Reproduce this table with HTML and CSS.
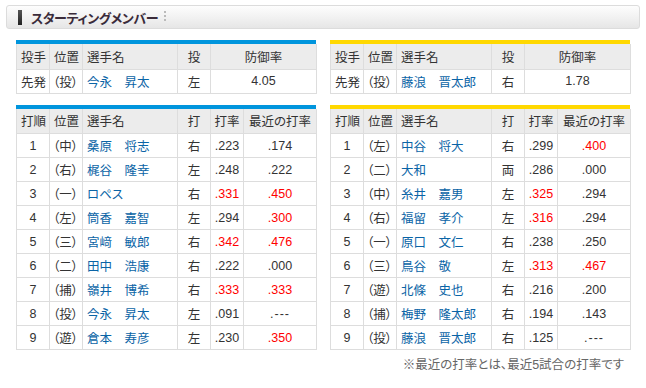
FILE: index.html
```html
<!DOCTYPE html>
<html lang="ja">
<head>
<meta charset="utf-8">
<link rel="stylesheet" href="styles.css">
</head>
<body>
<div class="page">
  <div class="title-bar">
    <span class="title-mark"></span>
    <h2 class="title">スターティングメンバー</h2>
    <span class="title-dots"></span>
  </div>

  <div class="grid">
    <div class="team team-home">
      <table class="tbl tbl-pitcher">
        <colgroup><col class="c-a"><col class="c-b"><col class="c-name"><col class="c-d"><col class="c-era"></colgroup>
        <thead><tr><th class="l">投手</th><th class="l">位置</th><th class="l">選手名</th><th>投</th><th>防御率</th></tr></thead>
        <tbody><tr><td class="l">先発</td><td class="pos">（投）</td><td class="l"><a>今永　昇太</a></td><td>左</td><td>4.05</td></tr></tbody>
      </table>
    </div>
    <div class="team team-away">
      <table class="tbl tbl-pitcher">
        <colgroup><col class="c-a"><col class="c-b"><col class="c-name"><col class="c-d"><col class="c-era"></colgroup>
        <thead><tr><th class="l">投手</th><th class="l">位置</th><th class="l">選手名</th><th>投</th><th>防御率</th></tr></thead>
        <tbody><tr><td class="l">先発</td><td class="pos">（投）</td><td class="l"><a>藤浪　晋太郎</a></td><td>右</td><td>1.78</td></tr></tbody>
      </table>
    </div>

    <div class="team team-home">
      <table class="tbl tbl-bat">
        <colgroup><col class="c-a"><col class="c-b"><col class="c-name"><col class="c-d"><col class="c-d"><col class="c-rec"></colgroup>
        <thead><tr><th class="l">打順</th><th class="l">位置</th><th class="l">選手名</th><th>打</th><th>打率</th><th>最近の打率</th></tr></thead>
        <tbody>
          <tr><td>1</td><td class="pos">（中）</td><td class="l"><a>桑原　将志</a></td><td>右</td><td>.223</td><td>.174</td></tr>
          <tr><td>2</td><td class="pos">（右）</td><td class="l"><a>梶谷　隆幸</a></td><td>左</td><td>.248</td><td>.222</td></tr>
          <tr><td>3</td><td class="pos">（一）</td><td class="l"><a>ロペス</a></td><td>右</td><td class="hot">.331</td><td class="hot">.450</td></tr>
          <tr><td>4</td><td class="pos">（左）</td><td class="l"><a>筒香　嘉智</a></td><td>左</td><td>.294</td><td class="hot">.300</td></tr>
          <tr><td>5</td><td class="pos">（三）</td><td class="l"><a>宮﨑　敏郎</a></td><td>右</td><td class="hot">.342</td><td class="hot">.476</td></tr>
          <tr><td>6</td><td class="pos">（二）</td><td class="l"><a>田中　浩康</a></td><td>右</td><td>.222</td><td>.000</td></tr>
          <tr><td>7</td><td class="pos">（捕）</td><td class="l"><a>嶺井　博希</a></td><td>右</td><td class="hot">.333</td><td class="hot">.333</td></tr>
          <tr><td>8</td><td class="pos">（投）</td><td class="l"><a>今永　昇太</a></td><td>左</td><td>.091</td><td class="dash">.---</td></tr>
          <tr><td>9</td><td class="pos">（遊）</td><td class="l"><a>倉本　寿彦</a></td><td>左</td><td>.230</td><td class="hot">.350</td></tr>
        </tbody>
      </table>
    </div>
    <div class="team team-away">
      <table class="tbl tbl-bat">
        <colgroup><col class="c-a"><col class="c-b"><col class="c-name"><col class="c-d"><col class="c-d"><col class="c-rec"></colgroup>
        <thead><tr><th class="l">打順</th><th class="l">位置</th><th class="l">選手名</th><th>打</th><th>打率</th><th>最近の打率</th></tr></thead>
        <tbody>
          <tr><td>1</td><td class="pos">（左）</td><td class="l"><a>中谷　将大</a></td><td>右</td><td>.299</td><td class="hot">.400</td></tr>
          <tr><td>2</td><td class="pos">（二）</td><td class="l"><a>大和</a></td><td>両</td><td>.286</td><td>.000</td></tr>
          <tr><td>3</td><td class="pos">（中）</td><td class="l"><a>糸井　嘉男</a></td><td>左</td><td class="hot">.325</td><td>.294</td></tr>
          <tr><td>4</td><td class="pos">（右）</td><td class="l"><a>福留　孝介</a></td><td>左</td><td class="hot">.316</td><td>.294</td></tr>
          <tr><td>5</td><td class="pos">（一）</td><td class="l"><a>原口　文仁</a></td><td>右</td><td>.238</td><td>.250</td></tr>
          <tr><td>6</td><td class="pos">（三）</td><td class="l"><a>鳥谷　敬</a></td><td>左</td><td class="hot">.313</td><td class="hot">.467</td></tr>
          <tr><td>7</td><td class="pos">（遊）</td><td class="l"><a>北條　史也</a></td><td>右</td><td>.216</td><td>.200</td></tr>
          <tr><td>8</td><td class="pos">（捕）</td><td class="l"><a>梅野　隆太郎</a></td><td>右</td><td>.194</td><td>.143</td></tr>
          <tr><td>9</td><td class="pos">（投）</td><td class="l"><a>藤浪　晋太郎</a></td><td>右</td><td>.125</td><td class="dash">.---</td></tr>
        </tbody>
      </table>
    </div>
  </div>

  <p class="note">※最近の打率とは、最近5試合の打率です</p>
</div>
</body>
</html>
```

FILE: styles.css
```css
* { box-sizing: border-box; }

html, body {
  margin: 0;
  padding: 0;
  background: #fff;
}

body {
  font-family: "Liberation Sans", "Noto Sans CJK JP", sans-serif;
  font-feature-settings: "palt";
  color: #333;
  font-size: 12.5px;
}

.page {
  padding: 5px 6px 0 6px;
}

.title-bar {
  height: 24px;
  border: 1px solid #dcdcdc;
  border-radius: 3px;
  background: linear-gradient(#fdfdfd 0%, #f3f3f3 45%, #e6e6e6 100%);
  display: flex;
  align-items: center;
  padding-left: 11px;
}

.title-mark {
  width: 4px;
  height: 15px;
  background: linear-gradient(#555, #222);
  margin-right: 9px;
}

.title {
  margin: 0;
  font-size: 13px;
  font-weight: bold;
  letter-spacing: -0.4px;
  color: #3a2b3a;
  font-family: "Noto Sans CJK JP", sans-serif;
  font-feature-settings: "palt";
  line-height: 1;
}

.title-dots {
  width: 2px;
  height: 12px;
  margin-left: 6px;
  background: repeating-linear-gradient(#bbb 0 2px, transparent 2px 4px);
}

.grid {
  display: grid;
  grid-template-columns: 300px 300px;
  column-gap: 14px;
  row-gap: 11px;
  padding: 11px 10px 0 10px;
}

.team {
  border-top: 4px solid #0095dd;
}

.team-away {
  border-top-color: #ffd800;
}

.tbl {
  width: 300px;
  table-layout: fixed;
  border-collapse: collapse;
}

.c-a, .c-b, .c-d { width: 33px; }
.c-name { width: 95px; }
.c-era { width: 106px; }
.c-rec { width: 73px; }

.tbl th, .tbl td {
  border: 1px solid #dddddd;
  padding: 0;
  text-align: center;
  font-weight: normal;
  white-space: nowrap;
  overflow: hidden;
}

.tbl thead tr th { border-top: none; }

.tbl th {
  background: #ececec;
  height: 25px;
}

.tbl td {
  height: 24px;
}

.tbl .l {
  text-align: left;
  padding-left: 4px;
}

.tbl .pos {
  text-align: left;
  padding-left: 3px;
}

.tbl a {
  color: #0a64a6;
  text-decoration: none;
}

.tbl .hot {
  color: #ff0000;
}

.tbl .dash {
  letter-spacing: 1px;
}

.note {
  margin: 4px 16px 0 0;
  text-align: right;
  color: #666;
  font-size: 12.5px;
}
```
